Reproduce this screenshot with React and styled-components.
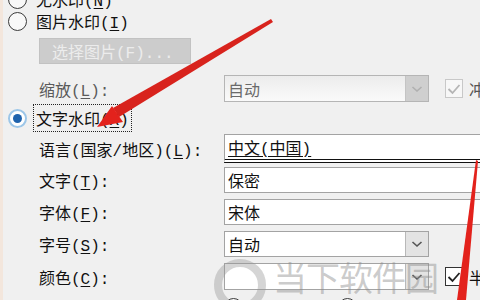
import React from 'react';
import styled, {createGlobalStyle, css} from 'styled-components';

const GlobalStyle = createGlobalStyle`
  html, body {
    margin: 0;
    padding: 0;
    background: #f0f0f0;
  }
`

const Page = styled.div`
  position: relative;
  width: 480px;
  height: 300px;
  overflow: hidden;
  background: #f0f0f0;
  border-left: 3px solid #f3e6dc;
  box-sizing: border-box;
  font-family: 'Liberation Mono', 'Noto Sans CJK SC', monospace;
  font-size: 16px;
  color: #111;
`

const Form = styled.div`
  display: flex;
  flex-direction: column;
  margin-top: -12px;
  padding-left: 5px;
`

const RadioRow = styled.div`
  display: flex;
  align-items: center;
  gap: 6px;
  height: ${({h}) => h || 22}px;
  margin-top: ${({mt}) => mt || 0}px;
`

const Radio = styled.span`
  position: relative;
  flex: none;
  box-sizing: border-box;
  width: 19px;
  height: 19px;
  border-radius: 50%;
  border: 1.5px solid #3a3a3a;
  background: #f8f8f8;

  ${({checked}) => checked && css`
    border: 2px solid #9cc6e8;
    background: #fff;
    &:after {
      content: '';
      position: absolute;
      left: 3px;
      top: 3px;
      width: 9px;
      height: 9px;
      border-radius: 50%;
      background: #1f63ad;
    }
  `}
`

const RadioText = styled.span`
  padding: 1px 2px;
  border: 1px dotted ${({focused}) => focused ? '#222' : 'transparent'};
  white-space: nowrap;
`

const U = styled.span`
  text-decoration: underline;
  text-underline-offset: 2px;
`

const ButtonRow = styled.div`
  padding-left: 31px;
  margin-top: 6px;
`

const DisabledButton = styled.div`
  box-sizing: border-box;
  width: 152px;
  height: 26px;
  display: flex;
  align-items: center;
  padding-left: 12px;
  background: #cccccc;
  border: 1px solid #c2c2c2;
  color: #ececec;
  white-space: nowrap;
`

const FieldRow = styled.div`
  display: grid;
  grid-template-columns: 185px 1fr;
  align-items: center;
  padding-left: 31px;
  height: ${({h}) => h || 26}px;
  margin-top: ${({mt}) => mt || 0}px;
`

const Label = styled.span`
  color: ${({disabled}) => disabled ? '#5a5a5a' : '#111'};
  white-space: nowrap;
`

const Field = styled.div`
  display: flex;
  align-items: center;
  height: 100%;
`

const TextBox = styled.div`
  box-sizing: border-box;
  height: 100%;
  width: 270px;
  display: flex;
  align-items: center;
  padding-left: 3px;
  background: #fff;
  border: 1px solid #a3a3a3;
  white-space: nowrap;

  ${({focused}) => focused && css`
    border-bottom: 4px double #111;
  `}
`

const Combo = styled.div`
  box-sizing: border-box;
  width: 205px;
  height: 100%;
  display: flex;
  align-items: stretch;
  border: 1px solid ${({disabled}) => disabled ? '#b5b5b5' : '#a3a3a3'};
  background: ${({disabled}) => disabled ? 'linear-gradient(#ececec, #fafafa)' : '#fff'};
`

const ComboText = styled.span`
  flex: 1;
  display: flex;
  align-items: center;
  padding-left: 3px;
  color: ${({disabled}) => disabled ? '#6a6a6a' : '#111'};
`

const DropButton = styled.span`
  width: 22px;
  display: flex;
  align-items: center;
  justify-content: center;
  background: ${({disabled}) => disabled ? '#cfcfcf' : '#e3e3e3'};
  border-left: 1px solid ${({disabled}) => disabled ? '#c4c4c4' : '#b8b8b8'};
`

const Check = styled.span`
  box-sizing: border-box;
  flex: none;
  width: 18px;
  height: 19px;
  margin-left: 16px;
  display: flex;
  align-items: center;
  justify-content: center;
  background: ${({disabled}) => disabled ? '#f7f7f7' : '#fff'};
  border: 1px solid ${({disabled}) => disabled ? '#c8c8c8' : '#333'};
`

const CheckLabel = styled.span`
  margin-left: 6px;
  white-space: nowrap;
  color: ${({disabled}) => disabled ? '#555' : '#111'};
`

const Overlay = styled.svg`
  position: absolute;
  left: -3px;
  top: 0;
  pointer-events: none;
`

const Watermark = styled.div`
  position: absolute;
  left: 270px;
  top: 252px;
  font-family: 'Noto Sans CJK SC', sans-serif;
  font-size: 34px;
  letter-spacing: -1px;
  color: rgba(140, 140, 140, 0.45);
  white-space: nowrap;
  pointer-events: none;
`

function Chevron({color}) {
  return (
    <svg width="12" height="8" viewBox="0 0 12 8">
      <path d="M1.5 2 L6 6 L10.5 2" fill="none" stroke={color} strokeWidth="1.6" />
    </svg>
  )
}

function Tick({color}) {
  return (
    <svg width="14" height="12" viewBox="0 0 14 12">
      <path d="M1.5 6 L5.5 10 L12.5 2" fill="none" stroke={color} strokeWidth="1.8" />
    </svg>
  )
}

export default function App() {
  return (
    <Page>
      <GlobalStyle />
      <Form>
        <RadioRow h={22}>
          <Radio />
          <RadioText>无水印(<U>N</U>)</RadioText>
        </RadioRow>
        <RadioRow h={22}>
          <Radio />
          <RadioText>图片水印(<U>I</U>)</RadioText>
        </RadioRow>
        <ButtonRow>
          <DisabledButton>选择图片(F)...</DisabledButton>
        </ButtonRow>
        <FieldRow h={27} mt={11}>
          <Label disabled>缩放(<U>L</U>):</Label>
          <Field>
            <Combo disabled>
              <ComboText disabled>自动</ComboText>
              <DropButton disabled><Chevron color="#b0b0b0" /></DropButton>
            </Combo>
            <Check disabled><Tick color="#b5b5b5" /></Check>
            <CheckLabel disabled>冲蚀(<U>W</U>)</CheckLabel>
          </Field>
        </FieldRow>
        <RadioRow h={24} mt={4}>
          <Radio checked />
          <RadioText focused>文字水印(<U>X</U>)</RadioText>
        </RadioRow>
        <FieldRow h={26} mt={4}>
          <Label>语言(国家/地区)(<U>L</U>):</Label>
          <Field>
            <TextBox focused><U>中文(中国)</U></TextBox>
          </Field>
        </FieldRow>
        <FieldRow h={26} mt={7}>
          <Label>文字(<U>T</U>):</Label>
          <Field>
            <TextBox>保密</TextBox>
          </Field>
        </FieldRow>
        <FieldRow h={26} mt={6}>
          <Label>字体(<U>F</U>):</Label>
          <Field>
            <TextBox>宋体</TextBox>
          </Field>
        </FieldRow>
        <FieldRow h={26} mt={6}>
          <Label>字号(<U>S</U>):</Label>
          <Field>
            <Combo>
              <ComboText>自动</ComboText>
              <DropButton><Chevron color="#555" /></DropButton>
            </Combo>
          </Field>
        </FieldRow>
        <FieldRow h={27} mt={6}>
          <Label>颜色(<U>C</U>):</Label>
          <Field>
            <Combo>
              <ComboText />
              <DropButton><Chevron color="#555" /></DropButton>
            </Combo>
            <Check><Tick color="#222" /></Check>
            <CheckLabel>半透明(<U>E</U>)</CheckLabel>
          </Field>
        </FieldRow>
        <FieldRow h={22} mt={5}>
          <Label>版式:</Label>
          <Field>
            <Radio />
            <CheckLabel>斜式(<U>D</U>)</CheckLabel>
            <Radio style={{marginLeft: 28}} />
            <CheckLabel>水平(<U>H</U>)</CheckLabel>
          </Field>
        </FieldRow>
      </Form>

      <Watermark>当下软件园</Watermark>

      <Overlay width="480" height="300" viewBox="0 0 480 300">
        <circle cx="240" cy="285" r="22" fill="none" stroke="rgba(150,150,150,0.4)" strokeWidth="8" />
        <polygon points="271,19 273,22 119,117 113,108" fill="#d8231d" />
        <polygon points="97,127 112,106 123,122" fill="#e3221c" />
        <polygon points="476,160 478,161 466,300 457,300" fill="#e3221c" />
      </Overlay>
    </Page>
  )
}
